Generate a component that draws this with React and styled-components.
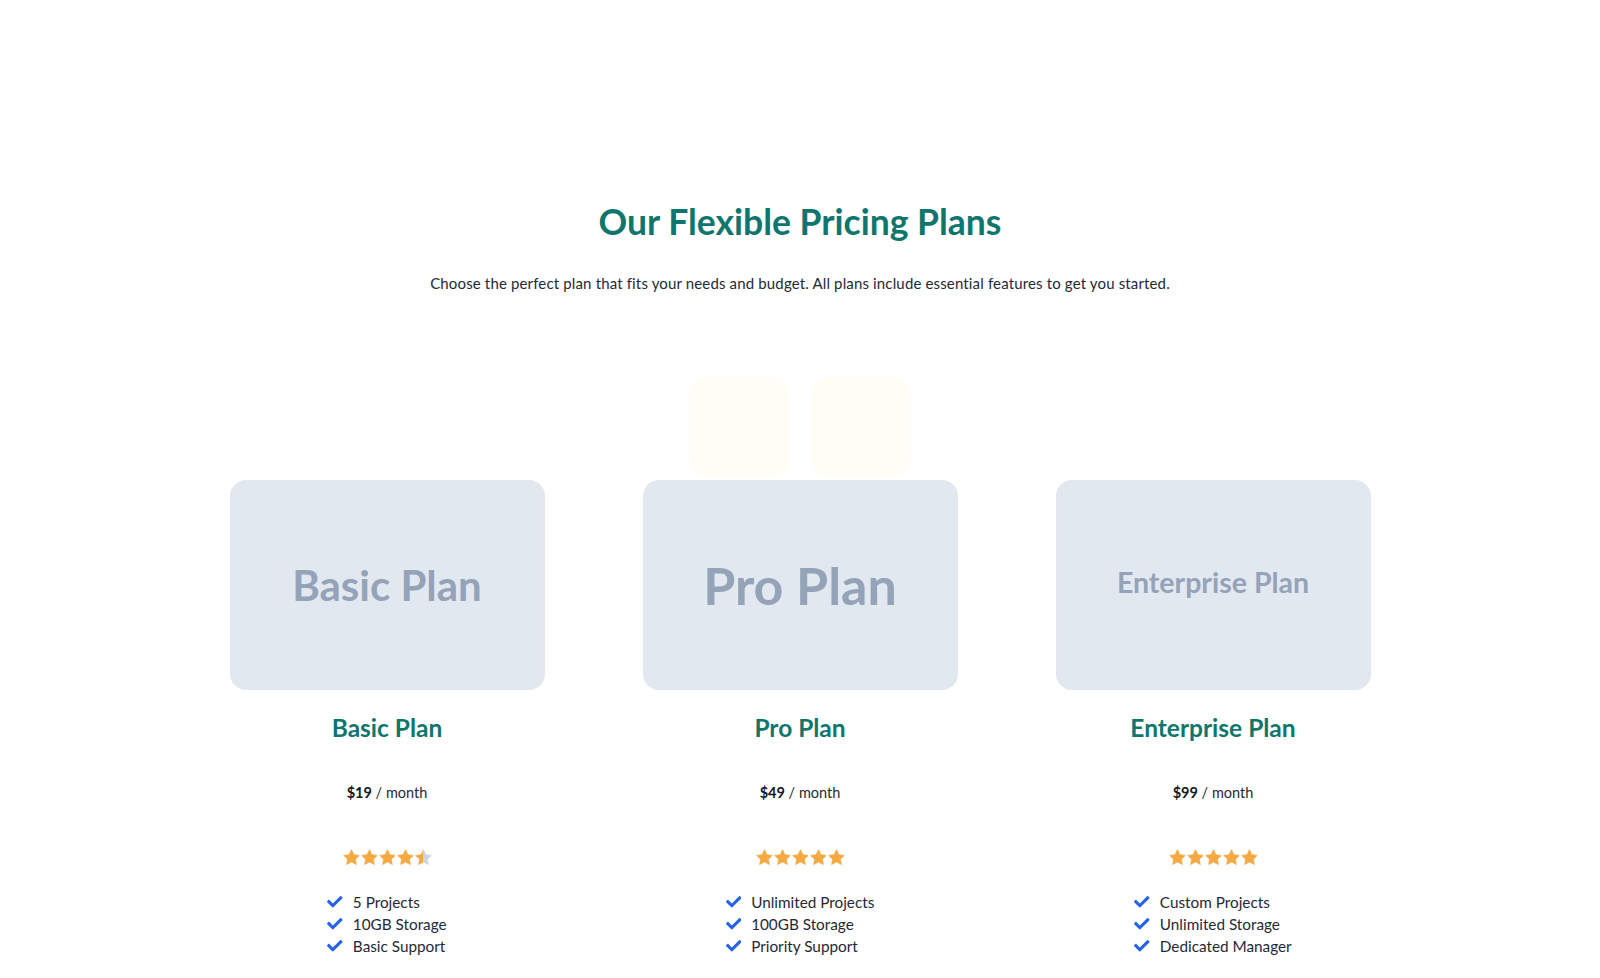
import React from "react";
import styled, { createGlobalStyle } from "styled-components";
import { FaCheck } from "react-icons/fa";

const GlobalStyle = createGlobalStyle`
    body {
        margin: 0;
        background: #ffffff;
        font-family: "Lato", "Noto Sans", sans-serif;
        color: #1f2937;
    }
`;

const plans = [
    {
        name: "Basic Plan",
        price: "$19",
        rating: 4.5,
        thumbSize: 42,
        thumbLift: 0,
        features: ["5 Projects", "10GB Storage", "Basic Support"],
    },
    {
        name: "Pro Plan",
        price: "$49",
        rating: 5,
        thumbSize: 52,
        thumbLift: 0,
        features: ["Unlimited Projects", "100GB Storage", "Priority Support"],
    },
    {
        name: "Enterprise Plan",
        price: "$99",
        rating: 5,
        thumbSize: 28.5,
        thumbLift: 6,
        features: ["Custom Projects", "Unlimited Storage", "Dedicated Manager"],
    },
];

const Section = styled.section`
    display: flex;
    flex-direction: column;
    align-items: center;
    padding: 201px 0 40px;
`;

const Title = styled.h2`
    margin: 0;
    font-size: 35.5px;
    line-height: 42px;
    font-weight: 700;
    color: #0f766e;
`;

const Subtitle = styled.p`
    margin: 30px 0 0;
    font-size: 15px;
    line-height: 20px;
    letter-spacing: 0.15px;
    color: #1f2937;
`;

const Decor = styled.div`
    display: flex;
    gap: 22px;
    margin-top: 84px;
`;

const DecorTile = styled.div`
    width: 100px;
    height: 100px;
    border-radius: 20px;
    background: #fffdf5;
`;

const Grid = styled.div`
    display: grid;
    grid-template-columns: repeat(3, 315px);
    column-gap: 98px;
    margin-top: 3px;
`;

const Card = styled.div`
    display: flex;
    flex-direction: column;
    align-items: center;
`;

const Thumb = styled.div`
    box-sizing: border-box;
    width: 315px;
    height: 210px;
    padding-bottom: ${({ lift }) => lift}px;
    border-radius: 16px;
    background: #e2e8f0;
    display: flex;
    align-items: center;
    justify-content: center;
    font-family: "Lato", sans-serif;
    font-weight: 700;
    font-size: ${({ size }) => size}px;
    color: #94a3b8;
`;

const PlanName = styled.h3`
    margin: 23px 0 0;
    font-size: 24.5px;
    line-height: 30px;
    font-weight: 700;
    color: #0f766e;
`;

const Price = styled.div`
    margin-top: 40px;
    font-size: 14.5px;
    line-height: 20px;
    color: #1f2937;

    strong {
        font-weight: 700;
        color: #111827;
    }
`;

const Stars = styled.div`
    display: flex;
    gap: 1px;
    margin-top: 46px;
`;

const FeatureList = styled.ul`
    list-style: none;
    margin: 25px 0 0;
    padding: 0;
`;

const Feature = styled.li`
    display: flex;
    align-items: center;
    gap: 10px;
    font-size: 15.3px;
    line-height: 22px;
    color: #1f2937;

    svg {
        color: #2563eb;
        font-size: 15.5px;
    }
`;

const STAR_PATH =
    "M8 0.6l2.3 4.7 5.1.7-3.7 3.6.9 5.1L8 12.3 3.4 14.7l.9-5.1L.6 6l5.1-.7z";

const Star = ({ fill, id }) => (
    <svg width="17" height="17" viewBox="0 0 16 16">
        <defs>
            <linearGradient id={id}>
                <stop offset={`${fill * 100}%`} stopColor="#f4a942" />
                <stop offset={`${fill * 100}%`} stopColor="#cbd5e0" />
            </linearGradient>
        </defs>
        <path
            d={STAR_PATH}
            fill={`url(#${id})`}
            stroke={`url(#${id})`}
            strokeWidth="0.6"
            strokeLinejoin="round"
        />
    </svg>
);

const Rating = ({ value, name }) => (
    <Stars>
        {[0, 1, 2, 3, 4].map((i) => (
            <Star
                key={i}
                id={`${name.replace(/\s/g, "")}-star-${i}`}
                fill={Math.max(0, Math.min(1, value - i))}
            />
        ))}
    </Stars>
);

const App = () => (
    <>
        <GlobalStyle />
        <Section>
            <Title>Our Flexible Pricing Plans</Title>
            <Subtitle>
                Choose the perfect plan that fits your needs and budget. All
                plans include essential features to get you started.
            </Subtitle>
            <Decor>
                <DecorTile />
                <DecorTile />
            </Decor>
            <Grid>
                {plans.map((plan) => (
                    <Card key={plan.name}>
                        <Thumb size={plan.thumbSize} lift={plan.thumbLift}>
                            {plan.name}
                        </Thumb>
                        <PlanName>{plan.name}</PlanName>
                        <Price>
                            <strong>{plan.price}</strong> / month
                        </Price>
                        <Rating value={plan.rating} name={plan.name} />
                        <FeatureList>
                            {plan.features.map((f) => (
                                <Feature key={f}>
                                    <FaCheck />
                                    {f}
                                </Feature>
                            ))}
                        </FeatureList>
                    </Card>
                ))}
            </Grid>
        </Section>
    </>
);

export default App;
